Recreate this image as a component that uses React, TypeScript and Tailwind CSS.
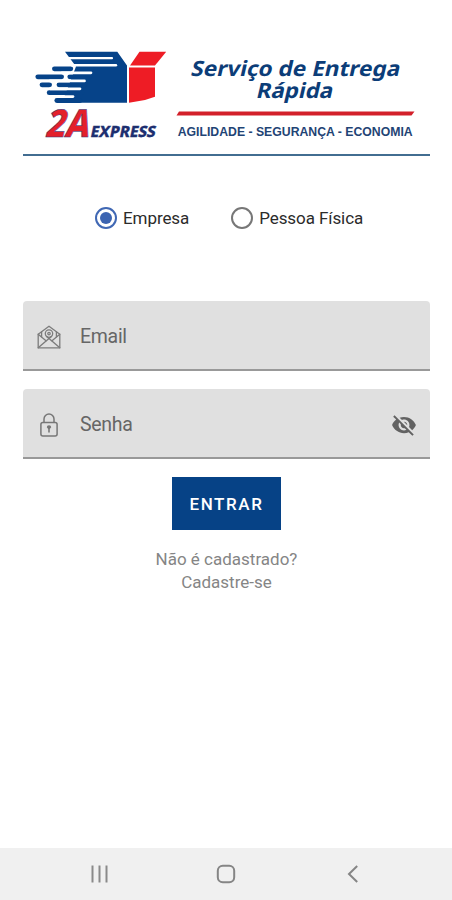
import { useState } from "react";

function Banner() {
  return (
    <svg viewBox="23 40 407 113" className="block h-[113px] w-full" role="img" aria-label="2A Express">
      {/* Caixa */}
      <path d="M65 51.7H117.3L127 65.5V102.8H62L76 66.5Z" fill="#064389" />
      <path d="M139.5 51.7H166.2L155 65.6H130Z" fill="#ee1c25" />
      <path d="M129 67.4H155V96.8L145 100L129 102.8Z" fill="#ee1c25" />

      {/* Linhas de velocidade */}
      <g stroke="#064389" strokeWidth="4.8" strokeLinecap="round">
        <path d="M54.4 68.8H70.8" />
        <path d="M79.8 68.8H92" />
        <path d="M37.8 76.8H61.6" />
        <path d="M69.8 76.8H90" />
        <path d="M42 84.8H49.6" />
        <path d="M59 84.8H85" />
        <path d="M49.2 92.7H82" />
        <path d="M56.8 100.5H80" />
      </g>
      <g stroke="#fff" strokeWidth="2.7" strokeLinecap="round">
        <path d="M68 58.2H112" strokeWidth="2.2" />
        <path d="M72 65.2H116" strokeWidth="2.4" />
        <path d="M62 72.8H91" />
        <path d="M50 80.9H84.5" />
        <path d="M50 88.8H80" />
        <path d="M50 96.6H73" />
      </g>

      <g className="font-['Noto_Sans',sans-serif]">
        <text transform="translate(44.5 136.7) skewX(-14)" textLength="43.5" lengthAdjust="spacingAndGlyphs" fill="#e3202b" stroke="#27377c" strokeWidth="0.5" className="text-[38.5px] font-extrabold">2A</text>
        <text transform="translate(89.8 136.7) skewX(-12)" textLength="65" lengthAdjust="spacingAndGlyphs" fill="#1d2f70" stroke="#1d2f70" strokeWidth="0.3" className="text-[15.5px] font-extrabold">EXPRESS</text>
        <text transform="translate(190 76.4) skewX(-13)" textLength="209" lengthAdjust="spacingAndGlyphs" fill="#0c3d78" className="text-[21px] font-bold">Serviço de Entrega</text>
        <text transform="translate(255.5 97.8) skewX(-13)" textLength="76.5" lengthAdjust="spacingAndGlyphs" fill="#0c3d78" className="text-[21px] font-bold">Rápida</text>
      </g>
      <path d="M179 111.5H414.5L411.5 115.6H176.5Z" fill="#d3202a" />
      <text x="177.7" y="135.6" textLength="235" lengthAdjust="spacingAndGlyphs" fill="#1f4475" className="font-['Liberation_Sans',sans-serif] text-[12px] font-bold">AGILIDADE - SEGURANÇA - ECONOMIA</text>
    </svg>
  );
}

function RadioOption({ label, checked, onSelect }: { label: string; checked: boolean; onSelect: () => void }) {
  return (
    <button type="button" role="radio" aria-checked={checked} onClick={onSelect} className="flex items-center gap-[6px]">
      <span className={`flex size-[22px] items-center justify-center rounded-full border-2 ${checked ? "border-[#4068b4]" : "border-[#777]"}`}>
        {checked && <span className="size-3 rounded-full bg-[#3c64b1]" />}
      </span>
      <span className="text-[17px] leading-6 tracking-[-0.08px] text-[#2b2b2b]">{label}</span>
    </button>
  );
}

function MailIcon() {
  return (
    <svg viewBox="0 0 24 24" className="size-6" fill="none" stroke="#7c7c7c" strokeWidth="1.3" strokeLinejoin="round" strokeLinecap="round">
      <path d="M1.2 9.2L12 1.2L22.8 9.2V22.8H1.2Z" />
      <path d="M1.2 9.2L9 15.8M22.8 9.2L15 15.8" />
      <path d="M1.2 22.8L12 13.4L22.8 22.8" />
      <path d="M4.6 11.8V6.8M19.4 11.8V6.8" />
      <circle cx="12" cy="8.6" r="3.7" />
      <circle cx="12" cy="8.6" r="1.2" />
      <path d="M9.6 11.4L12 13.4L14.4 11.4" />
    </svg>
  );
}

function LockIcon() {
  return (
    <svg viewBox="0 0 18 24" className="h-6 w-[18px]" fill="none" stroke="#777" strokeWidth="1.5">
      <rect x="0.9" y="9.6" width="16.2" height="13.4" rx="2" />
      <path d="M4 9.6V6A5 5 0 0 1 14 6V9.6" />
      <path d="M6.8 14.2A2.2 2 0 0 1 11.2 14.2L9.8 16V19.4H8.2V16Z" fill="#777" stroke="none" />
    </svg>
  );
}

function EyeOffIcon() {
  return (
    <svg viewBox="0 0 24 24" className="size-[26px]" fill="#626262">
      <path d="M12 7c2.76 0 5 2.24 5 5 0 .65-.13 1.26-.36 1.83l2.92 2.92c1.51-1.26 2.7-2.89 3.43-4.75-1.73-4.39-6-7.5-11-7.5-1.4 0-2.74.25-3.98.7l2.16 2.16C10.74 7.13 11.35 7 12 7zM2 4.27l2.28 2.28.46.46C3.08 8.3 1.78 10.02 1 12c1.73 4.39 6 7.5 11 7.5 1.55 0 3.03-.3 4.38-.84l.42.42L19.73 22 21 20.73 3.27 3 2 4.27zM7.53 9.8l1.55 1.55c-.05.21-.08.43-.08.65 0 1.66 1.34 3 3 3 .22 0 .44-.03.65-.08l1.55 1.55c-.67.33-1.41.53-2.2.53-2.76 0-5-2.24-5-5 0-.79.2-1.53.53-2.2zm4.31-.78l3.15 3.15.02-.16c0-1.66-1.34-3-3-3l-.17.01z" />
    </svg>
  );
}

export default function App() {
  const [tipo, setTipo] = useState("empresa");
  const [showSenha, setShowSenha] = useState(false);

  return (
    <div className="flex h-[900px] w-[452px] flex-col bg-white font-[Roboto,sans-serif]">
      <main className="flex flex-1 flex-col pr-[22px] pl-[23px] pt-10">
        <header className="border-b-2 border-[#426d91] pb-[1px]">
          <Banner />
        </header>

        {/* Tipo de conta */}
        <div role="radiogroup" className="mt-[50px] flex h-6 items-center gap-[42px] pl-[72px]">
          <RadioOption label="Empresa" checked={tipo === "empresa"} onSelect={() => setTipo("empresa")} />
          <RadioOption label="Pessoa Física" checked={tipo === "fisica"} onSelect={() => setTipo("fisica")} />
        </div>

        {/* Formulário */}
        <form className="mt-[71px] flex flex-col items-center" onSubmit={(e) => e.preventDefault()}>
          <label className="flex h-[70px] w-full items-center rounded-t-[4px] border-b-2 border-[#999] bg-[#e0e0e0] px-[14px]">
            <span className="flex w-6 justify-center pt-[3px]">
              <MailIcon />
            </span>
            <input type="email" placeholder="Email" className="ml-[19px] min-w-0 flex-1 bg-transparent pt-1 text-[19.5px] tracking-[-0.3px] text-[#666] outline-none placeholder:text-[#666]" />
          </label>

          <label className="mt-[18px] flex h-[70px] w-full items-center rounded-t-[4px] border-b-2 border-[#999] bg-[#e0e0e0] px-[13px]">
            <span className="ml-px flex w-6 justify-center pt-[3px]">
              <LockIcon />
            </span>
            <input type={showSenha ? "text" : "password"} placeholder="Senha" className="ml-[19px] min-w-0 flex-1 bg-transparent pt-1 text-[19.5px] tracking-[-0.3px] text-[#666] outline-none placeholder:text-[#666]" />
            <button type="button" aria-label="Mostrar senha" className="pt-[3px]" onClick={() => setShowSenha(!showSenha)}>
              <EyeOffIcon />
            </button>
          </label>

          <button type="submit" className="mt-[18px] h-[53px] w-[109px] bg-[#064286] pt-[2px] text-[17px] font-medium tracking-[1.6px] text-white">
            ENTRAR
          </button>
        </form>

        <p className="mt-[18px] text-center text-[17px] leading-[22.5px] text-[#858585]">
          Não é cadastrado?
          <br />
          Cadastre-se
        </p>
      </main>

      {/* Barra de navegação */}
      <nav className="flex h-[52px] items-center bg-[#f0f0f0] pl-[90px]">
        <svg viewBox="0 0 18 18" className="size-[18px]" stroke="#8a8a8a" strokeWidth="2">
          <path d="M2.5 0.5V17.5M9.5 0.5V17.5M16.5 0.5V17.5" />
        </svg>
        <svg viewBox="0 0 20 20" className="ml-[108px] size-5" fill="none" stroke="#858585" strokeWidth="2">
          <rect x="1.8" y="1.8" width="16.4" height="16.4" rx="5" />
        </svg>
        <svg viewBox="0 0 12 18" className="ml-[111px] h-[18px] w-3" fill="none" stroke="#858585" strokeWidth="2">
          <path d="M10.2 1L2 9L10.2 17" />
        </svg>
      </nav>
    </div>
  );
}
